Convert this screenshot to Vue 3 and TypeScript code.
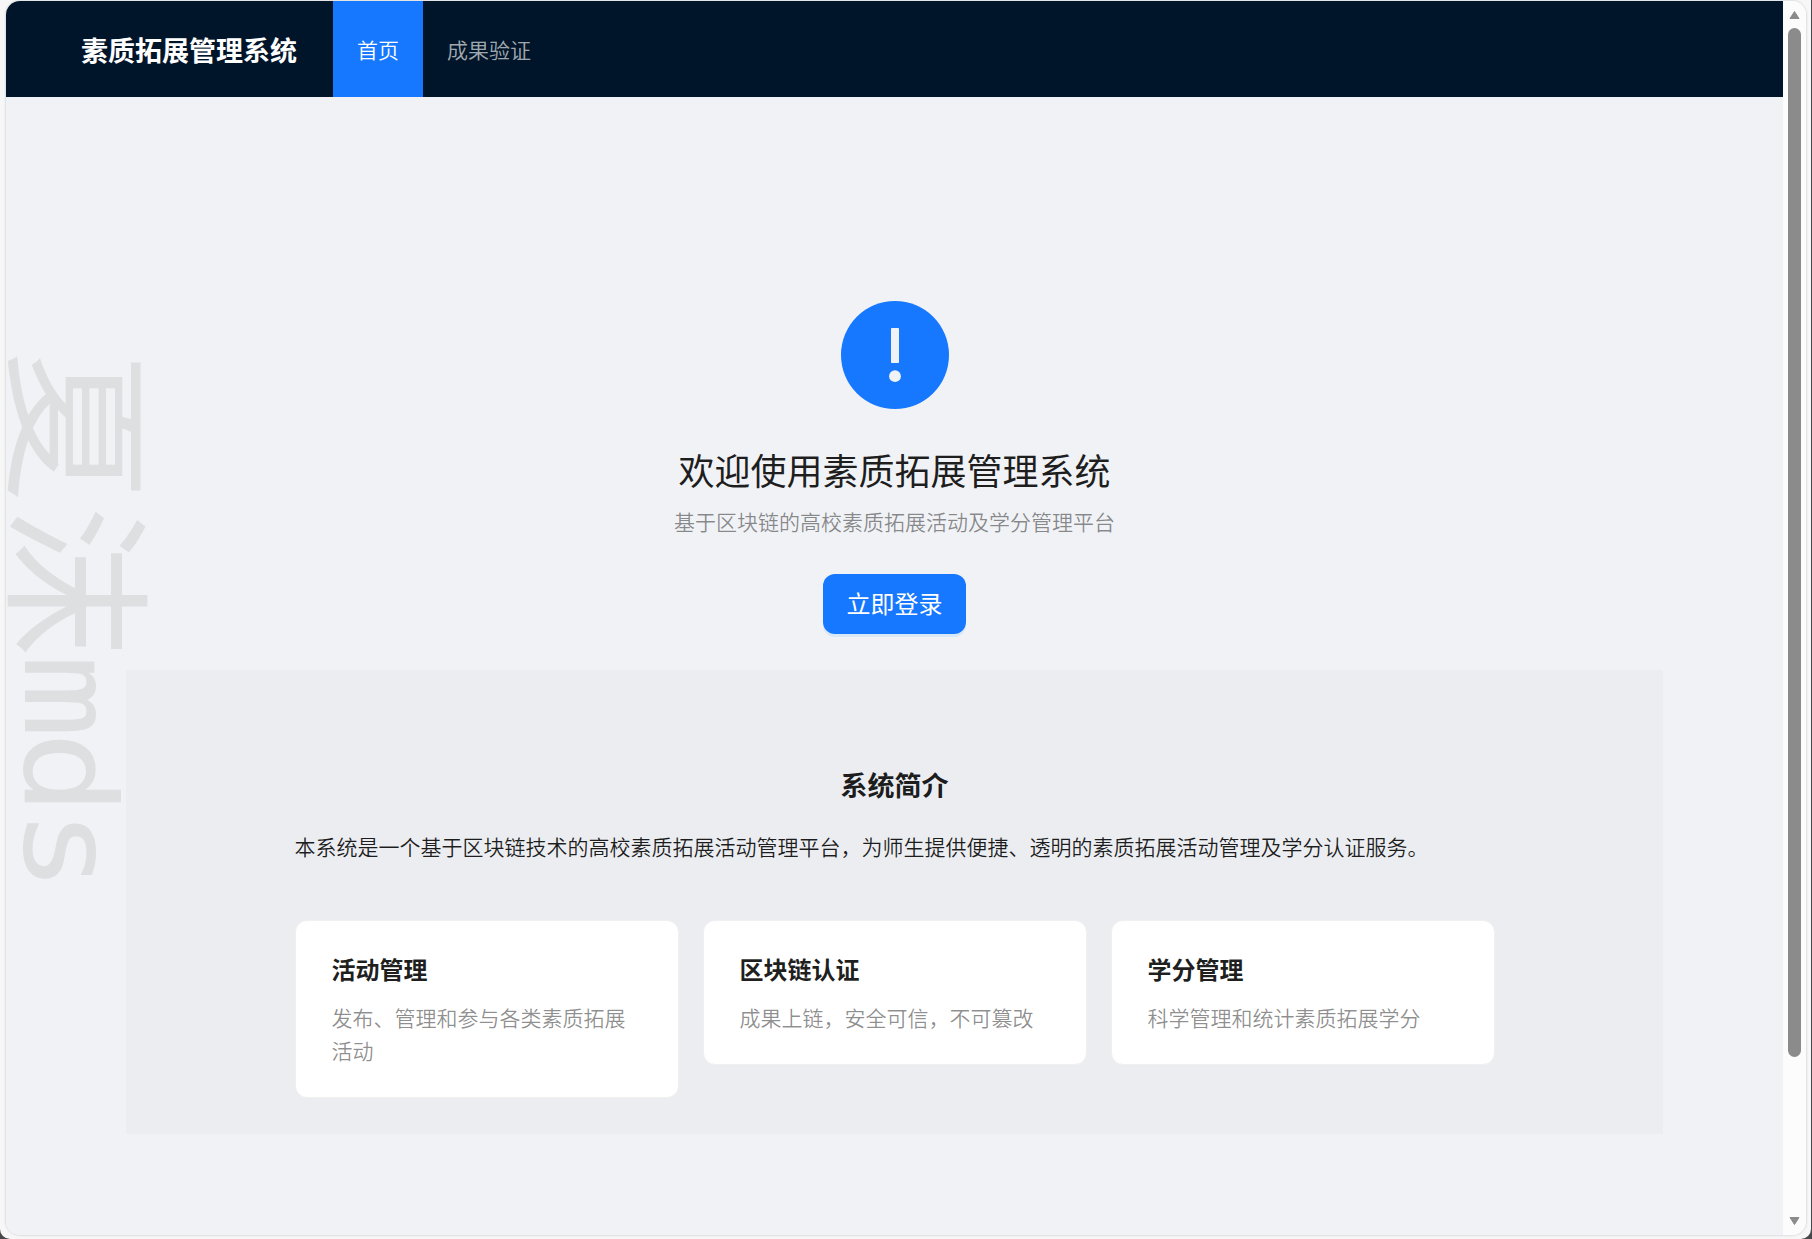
<script setup lang="ts">
interface NavItem {
  label: string
  active: boolean
}

interface Feature {
  title: string
  description: string
}

const navItems: NavItem[] = [
  { label: '首页', active: true },
  { label: '成果验证', active: false },
]

const features: Feature[] = [
  { title: '活动管理', description: '发布、管理和参与各类素质拓展活动' },
  { title: '区块链认证', description: '成果上链，安全可信，不可篡改' },
  { title: '学分管理', description: '科学管理和统计素质拓展学分' },
]
</script>

<template>
  <div class="desktop">
    <div class="window">
      <div class="viewport">
        <div class="page">
          <header class="header">
            <div class="logo">素质拓展管理系统</div>
            <nav class="menu">
              <a
                v-for="item in navItems"
                :key="item.label"
                class="menu-item"
                :class="{ active: item.active }"
              >{{ item.label }}</a>
            </nav>
          </header>
          <main class="result">
            <svg class="result-icon" viewBox="0 0 108 108" aria-hidden="true">
              <circle cx="54" cy="54" r="54" fill="#1677ff" />
              <rect x="50" y="27" width="8" height="35" rx="0.8" fill="#f0f2f5" />
              <circle cx="54" cy="75.2" r="5.9" fill="#f0f2f5" />
            </svg>
            <h1 class="result-title">欢迎使用素质拓展管理系统</h1>
            <p class="result-subtitle">基于区块链的高校素质拓展活动及学分管理平台</p>
            <button class="login" type="button">立即登录</button>
            <section class="intro">
              <div class="intro-inner">
                <h2 class="intro-title">系统简介</h2>
                <p class="intro-text">本系统是一个基于区块链技术的高校素质拓展活动管理平台，为师生提供便捷、透明的素质拓展活动管理及学分认证服务。</p>
                <div class="cards">
                  <article v-for="feature in features" :key="feature.title" class="card">
                    <h3 class="card-title">{{ feature.title }}</h3>
                    <p class="card-text">{{ feature.description }}</p>
                  </article>
                </div>
              </div>
            </section>
          </main>
        </div>
        <div class="scrollbar">
          <svg class="arrow" viewBox="0 0 13 10"><path d="M6.5 1.5 11 8.5H2Z" /></svg>
          <div class="thumb"></div>
          <svg class="arrow" viewBox="0 0 13 10"><path d="M6.5 8.5 11 1.5H2Z" /></svg>
        </div>
      </div>
    </div>
    <svg class="watermark" width="200" height="570" viewBox="0 0 200 570">
      <text class="mark-han" transform="translate(20 11) rotate(90)">夏沫</text>
      <text class="mark-latin" transform="translate(25 314) rotate(90) scale(1.08 0.98)">mds</text>
    </svg>
  </div>
</template>

<style>
body {
  margin: 0;
  overflow: hidden;
}
</style>

<style scoped>
.desktop {
  position: relative;
  width: 1812px;
  height: 1239px;
  background: #48484a;
  overflow: hidden;
  font-family: "Noto Sans CJK SC", sans-serif;
  font-weight: 350;
  color: rgba(0, 0, 0, 0.88);
}
.window {
  box-sizing: border-box;
  width: 1811px;
  height: 1239px;
  padding: 1px 5px 4px 6px;
  background: #f7f7f7;
  border-radius: 0 0 10px 10px;
}
.viewport {
  display: flex;
  height: 1234px;
  border-radius: 14px;
  overflow: hidden;
  box-shadow: 0 0 2px 1px #dcdedf;
}
.page {
  width: 1777px;
  background: #f0f2f6;
}
.header {
  box-sizing: border-box;
  display: flex;
  height: 96px;
  padding-left: 75px;
  background: #001529;
  color: #fff;
  line-height: 96px;
}
.logo {
  margin-right: 36px;
  padding-top: 1px;
  font-size: 27px;
  font-weight: 700;
}
.menu {
  display: flex;
}
.menu-item {
  padding: 0 24px;
  font-size: 21px;
  color: rgba(255, 255, 255, 0.65);
}
.menu-item.active {
  background: #1677ff;
  color: #fff;
}
.result {
  display: flex;
  flex-direction: column;
  align-items: center;
  padding: 204px 120px 0;
}
.result-icon {
  width: 108px;
  height: 108px;
}
h1,
h2,
h3,
p {
  margin: 0;
}
.result-title {
  margin-top: 33px;
  font-size: 36px;
  font-weight: 400;
  line-height: 54px;
}
.result-subtitle {
  margin-top: 9px;
  font-size: 21px;
  line-height: 33px;
  color: rgba(0, 0, 0, 0.46);
}
.login {
  box-sizing: border-box;
  width: 143px;
  height: 60px;
  margin-top: 36px;
  padding: 0 0 2px;
  border: 0;
  border-radius: 12px;
  background: #1677ff;
  box-shadow: 0 3px 0 rgba(5, 145, 255, 0.1);
  color: #fff;
  font: 400 24px/58px "Noto Sans CJK SC", sans-serif;
}
.intro {
  box-sizing: border-box;
  width: 100%;
  height: 464px;
  margin-top: 36px;
  padding-top: 95px;
  background: rgba(0, 0, 0, 0.02);
}
.intro-inner {
  width: 1200px;
  margin: 0 auto;
}
.intro-title {
  font-size: 27px;
  font-weight: 700;
  line-height: 40px;
  text-align: center;
}
.intro-text {
  margin-top: 25px;
  font-size: 21px;
  line-height: 33px;
  white-space: nowrap;
}
.cards {
  display: flex;
  align-items: flex-start;
  gap: 24px;
  margin-top: 57px;
}
.card {
  box-sizing: border-box;
  flex: 1;
  padding: 30px 36px;
  border: 1px solid #f0f0f0;
  border-radius: 12px;
  background: #fff;
}
.card-title {
  font-size: 24px;
  font-weight: 700;
  line-height: 36px;
}
.card-text {
  margin-top: 14px;
  font-size: 21px;
  line-height: 33px;
  color: rgba(0, 0, 0, 0.46);
}
.scrollbar {
  box-sizing: border-box;
  display: flex;
  flex: 1;
  flex-direction: column;
  align-items: center;
  padding: 9px 0;
  background: #fcfcfc;
}
.arrow {
  width: 13px;
  height: 10px;
  fill: #8b8b8b;
  stroke: #8b8b8b;
  stroke-linejoin: round;
}
.thumb {
  width: 13px;
  height: 1029px;
  margin: 8px 0 auto;
  border-radius: 7px;
  background: #8b8b8b;
}
/* Vertical signature laid over the left edge of the page */
.watermark {
  position: absolute;
  top: 340px;
  left: 0;
  overflow: visible;
  fill: #dedfe1;
}
.mark-han {
  font: 400 151px "Noto Sans CJK SC", sans-serif;
  letter-spacing: 4px;
}
.mark-latin {
  font: 400 129px "DejaVu Sans Mono", monospace;
  letter-spacing: -6px;
}
</style>
